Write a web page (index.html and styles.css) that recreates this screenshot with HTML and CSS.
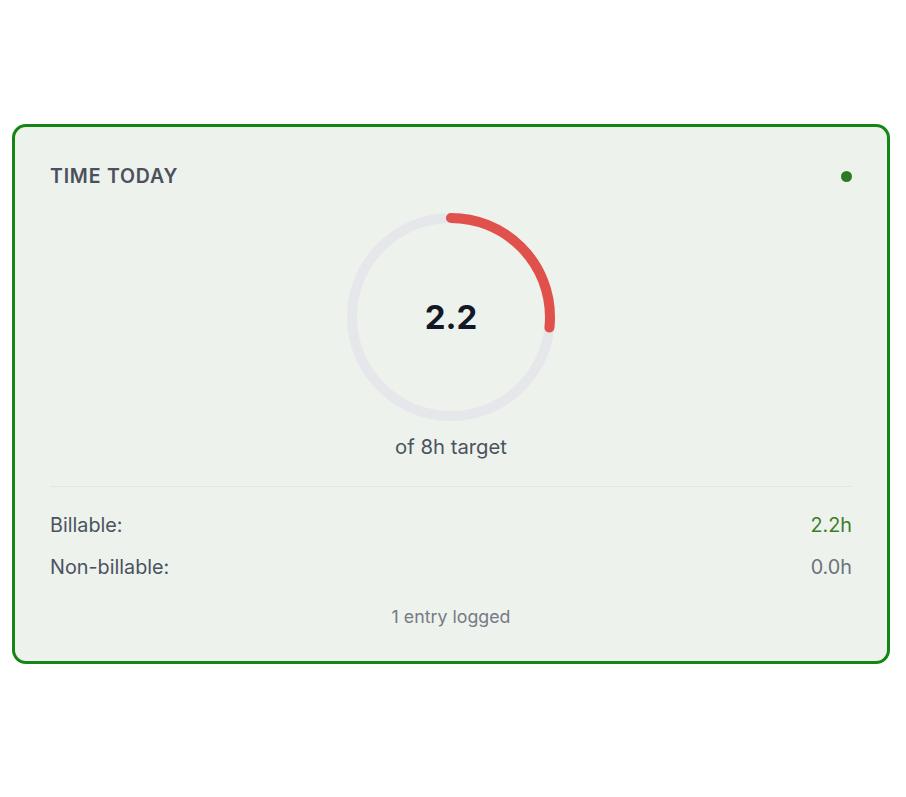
FILE: index.html
```html
<!DOCTYPE html>
<html lang="en">
<head>
    <meta charset="UTF-8">
    <meta name="viewport" content="width=device-width, initial-scale=1.0">
    <title>Time Today</title>
    <link rel="stylesheet" href="styles.css">
</head>
<body>
    <div class="card">
        <div class="cardHeader">
            <h2>TIME TODAY</h2>
            <span class="statusDot"></span>
        </div>

        <!-- Progress ring: 2.2 of 8h -->
        <div class="ring">
            <svg width="208" height="208" viewBox="0 0 208 208">
                <circle cx="104" cy="104" r="99" fill="none" stroke="#e6e7eb" stroke-width="10"/>
                <circle cx="104" cy="104" r="99" fill="none" stroke="#e0514b" stroke-width="10"
                        stroke-linecap="round" stroke-dasharray="166 1000"
                        transform="rotate(-90 104 104)"/>
            </svg>
            <div class="ringValue">2.2</div>
        </div>
        <p class="target">of 8h target</p>

        <div class="divider"></div>

        <div class="row">
            <span>Billable:</span>
            <span class="billable">2.2h</span>
        </div>
        <div class="row">
            <span>Non-billable:</span>
            <span class="nonBillable">0.0h</span>
        </div>

        <p class="entries">1 entry logged</p>
    </div>
</body>
</html>
```

FILE: styles.css
```css
body {
    margin: 0;
    background: #ffffff;
    font-family: Inter, "Noto Sans", Arial, sans-serif;
}

.card {
    box-sizing: border-box;
    width: 878px;
    height: 540px;
    margin: 124px 0 0 12px;
    padding: 37px 35px 0 35px;
    border: 3px solid #138613;
    border-radius: 14px;
    background: #edf2ed;
    display: flex;
    flex-direction: column;
}

.cardHeader {
    display: flex;
    justify-content: space-between;
    align-items: center;
    height: 24px;
}

.cardHeader h2 {
    margin: 0;
    font-size: 19.5px;
    font-weight: 600;
    letter-spacing: 0.8px;
    color: #4a505c;
}

.statusDot {
    width: 11px;
    height: 11px;
    border-radius: 50%;
    background: #2d7a24;
}

.ring {
    position: relative;
    width: 208px;
    height: 208px;
    margin: 25px auto 0 auto;
}

.ring svg {
    display: block;
}

.ringValue {
    position: absolute;
    inset: 0;
    display: flex;
    align-items: center;
    justify-content: center;
    font-size: 33px;
    font-weight: 700;
    color: #121826;
}

.target {
    margin: 14px 0 0 0;
    text-align: center;
    font-size: 20.3px;
    line-height: 24px;
    color: #4b5260;
}

.divider {
    height: 1px;
    margin-top: 27px;
    background: #e2e6e2;
}

.row {
    display: flex;
    justify-content: space-between;
    font-size: 19.8px;
    line-height: 24px;
    color: #4b5260;
    margin-top: 18px;
}

.divider + .row {
    margin-top: 26px;
}

.billable {
    color: #3b7c2b;
}

.nonBillable {
    color: #6b717c;
}

.entries {
    margin: 27px 0 0 0;
    text-align: center;
    font-size: 17.8px;
    line-height: 22px;
    color: #757b85;
}
```
